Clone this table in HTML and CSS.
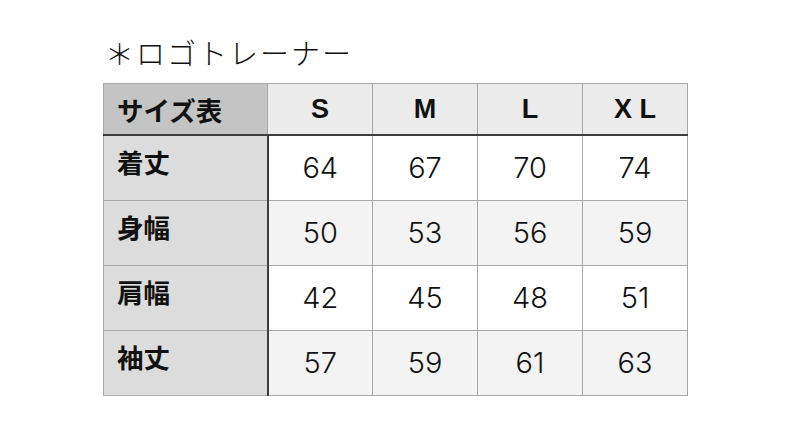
FILE: index.html
```html
<!DOCTYPE html>
<html lang="ja">
<head>
<meta charset="utf-8">
<link rel="stylesheet" href="styles.css">
</head>
<body>
<div class="page">
  <h1 class="title">＊ロゴトレーナー</h1>
  <table class="size-table">
    <colgroup>
      <col class="col-label">
      <col class="col-size">
      <col class="col-size">
      <col class="col-size">
      <col class="col-size">
    </colgroup>
    <thead>
      <tr>
        <th class="corner">サイズ表</th>
        <th>S</th>
        <th>M</th>
        <th>L</th>
        <th>X L</th>
      </tr>
    </thead>
    <tbody>
      <tr>
        <th class="label">着丈</th>
        <td>64</td><td>67</td><td>70</td><td>74</td>
      </tr>
      <tr class="alt">
        <th class="label">身幅</th>
        <td>50</td><td>53</td><td>56</td><td>59</td>
      </tr>
      <tr>
        <th class="label">肩幅</th>
        <td>42</td><td>45</td><td>48</td><td>51</td>
      </tr>
      <tr class="alt">
        <th class="label">袖丈</th>
        <td>57</td><td>59</td><td>61</td><td>63</td>
      </tr>
    </tbody>
  </table>
</div>
</body>
</html>
```
FILE: styles.css
```css
html, body {
  margin: 0;
  padding: 0;
  background: #ffffff;
}
body {
  font-family: "Liberation Sans", "Noto Sans CJK JP", sans-serif;
  color: #111111;
}
.page {
  padding: 32px 0 0 103px;
}
.title {
  margin: 0 0 11px 0;
  font-family: "Noto Sans CJK JP", sans-serif;
  font-weight: 300;
  font-size: 29px;
  line-height: 40px;
  letter-spacing: 2px;
  padding-left: 2px;
  color: #111111;
}
.size-table {
  border-collapse: collapse;
  table-layout: fixed;
  width: 584px;
}
.col-label {
  width: 164px;
}
.col-size {
  width: 105px;
}
.size-table th,
.size-table td {
  border: 1px solid #a8a8a8;
  padding: 0;
}
.size-table thead th {
  height: 50px;
  background: #ebebeb;
  font-size: 27px;
  font-weight: 700;
  text-align: center;
  vertical-align: middle;
  border-bottom: 2px solid #3e3e3e;
}
.size-table thead th.corner {
  background: #c4c4c4;
  text-align: left;
  padding-left: 13px;
  font-family: "Noto Sans CJK JP", sans-serif;
  font-size: 26.5px;
  border-right: 1px solid #a8a8a8;
}
.size-table tbody tr {
  height: 65px;
}
.size-table td {
  text-align: center;
  vertical-align: middle;
  font-family: "Inter", "Liberation Sans", sans-serif;
  font-weight: 300;
  font-size: 29px;
  background: #ffffff;
}
.size-table tr.alt td {
  background: #f3f3f3;
}
.size-table th.label {
  background: #dcdcdc;
  text-align: left;
  vertical-align: top;
  padding: 8px 0 0 13px;
  font-family: "Noto Sans CJK JP", sans-serif;
  font-size: 26.5px;
  font-weight: 700;
  line-height: 36px;
  border-right: 2px solid #3e3e3e;
}
```
